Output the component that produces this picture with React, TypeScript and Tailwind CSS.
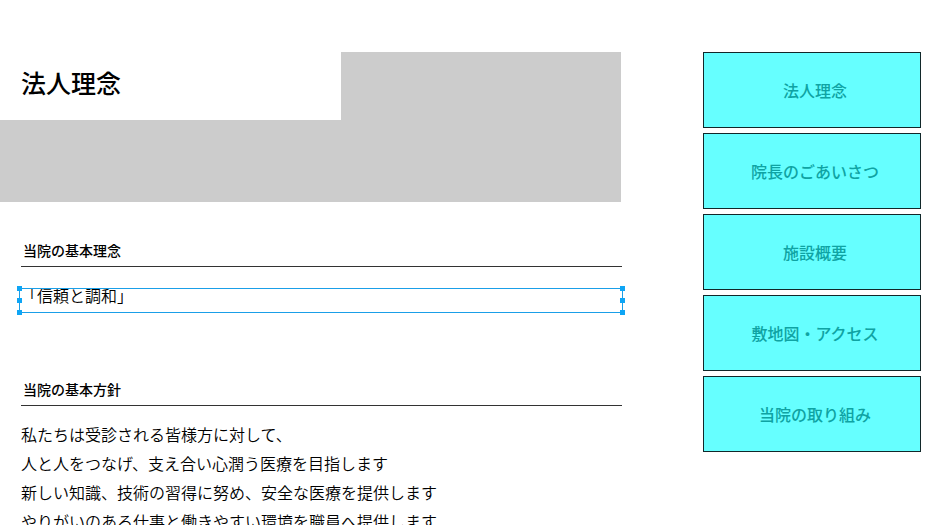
import React from "react";

const navItems = ["法人理念", "院長のごあいさつ", "施設概要", "敷地図・アクセス", "当院の取り組み"];

const policies = [
  "私たちは受診される皆様方に対して、",
  "人と人をつなげ、支え合い心潤う医療を目指します",
  "新しい知識、技術の習得に努め、安全な医療を提供します",
  "やりがいのある仕事と働きやすい環境を職員へ提供します",
];

const handles = [
  "-left-[3px] -top-[3px]",
  "-left-[3px] top-[9px]",
  "-left-[3px] -bottom-[3px]",
  "-right-[3px] -top-[3px]",
  "-right-[3px] top-[9px]",
  "-right-[3px] -bottom-[3px]",
];

function SectionHeading({ children }: { children: React.ReactNode }) {
  return (
    <h2 className="border-b border-[#333] pb-1 pl-0.5 text-sm leading-6 font-medium">{children}</h2>
  );
}

function SelectionFrame() {
  return (
    <div aria-hidden="true" className="pointer-events-none absolute inset-y-0 -right-px -left-0.5 border border-[#1a9fe8]">
      {handles.map((place) => (
        <span key={place} className={`absolute size-[5px] bg-[#0ea5f5] ${place}`} />
      ))}
    </div>
  );
}

export default function App() {
  return (
    <div className="flex items-start gap-[82px] bg-white pt-[52px] pr-[27px] font-['Noto_Sans_CJK_JP',sans-serif] text-black">
      <main className="min-w-0 flex-1">
        <header className="bg-[#ccc] pb-[82px]">
          <div className="flex h-[68px] w-[341px] items-center bg-white pb-2 pl-[21px]">
            <h1 className="text-[25px] leading-8 font-medium">法人理念</h1>
          </div>
        </header>
        <div className="-mr-px pt-9 pl-[21px]">
          <section className="pb-16">
            <SectionHeading>当院の基本理念</SectionHeading>
            <div className="relative mt-[21px] h-[25px]">
              <p className="text-base leading-[14px] font-[350]">「信頼と調和」</p>
              <SelectionFrame />
            </div>
          </section>
          <section>
            <SectionHeading>当院の基本方針</SectionHeading>
            <ul className="mt-[14px] text-base leading-[29px] font-[350]">
              {policies.map((line) => (
                <li key={line}>{line}</li>
              ))}
            </ul>
          </section>
        </div>
      </main>
      <nav aria-label="法人案内" className="w-[218px] shrink-0">
        <ul className="flex flex-col gap-[5px]">
          {navItems.map((item) => (
            <li key={item}>
              <a
                href="#"
                className="flex h-[76px] items-center justify-center border border-[#12282a] bg-[#6ff] pl-1.5 text-base leading-6 font-medium text-[#0fa3a3]"
              >
                {item}
              </a>
            </li>
          ))}
        </ul>
      </nav>
    </div>
  );
}
